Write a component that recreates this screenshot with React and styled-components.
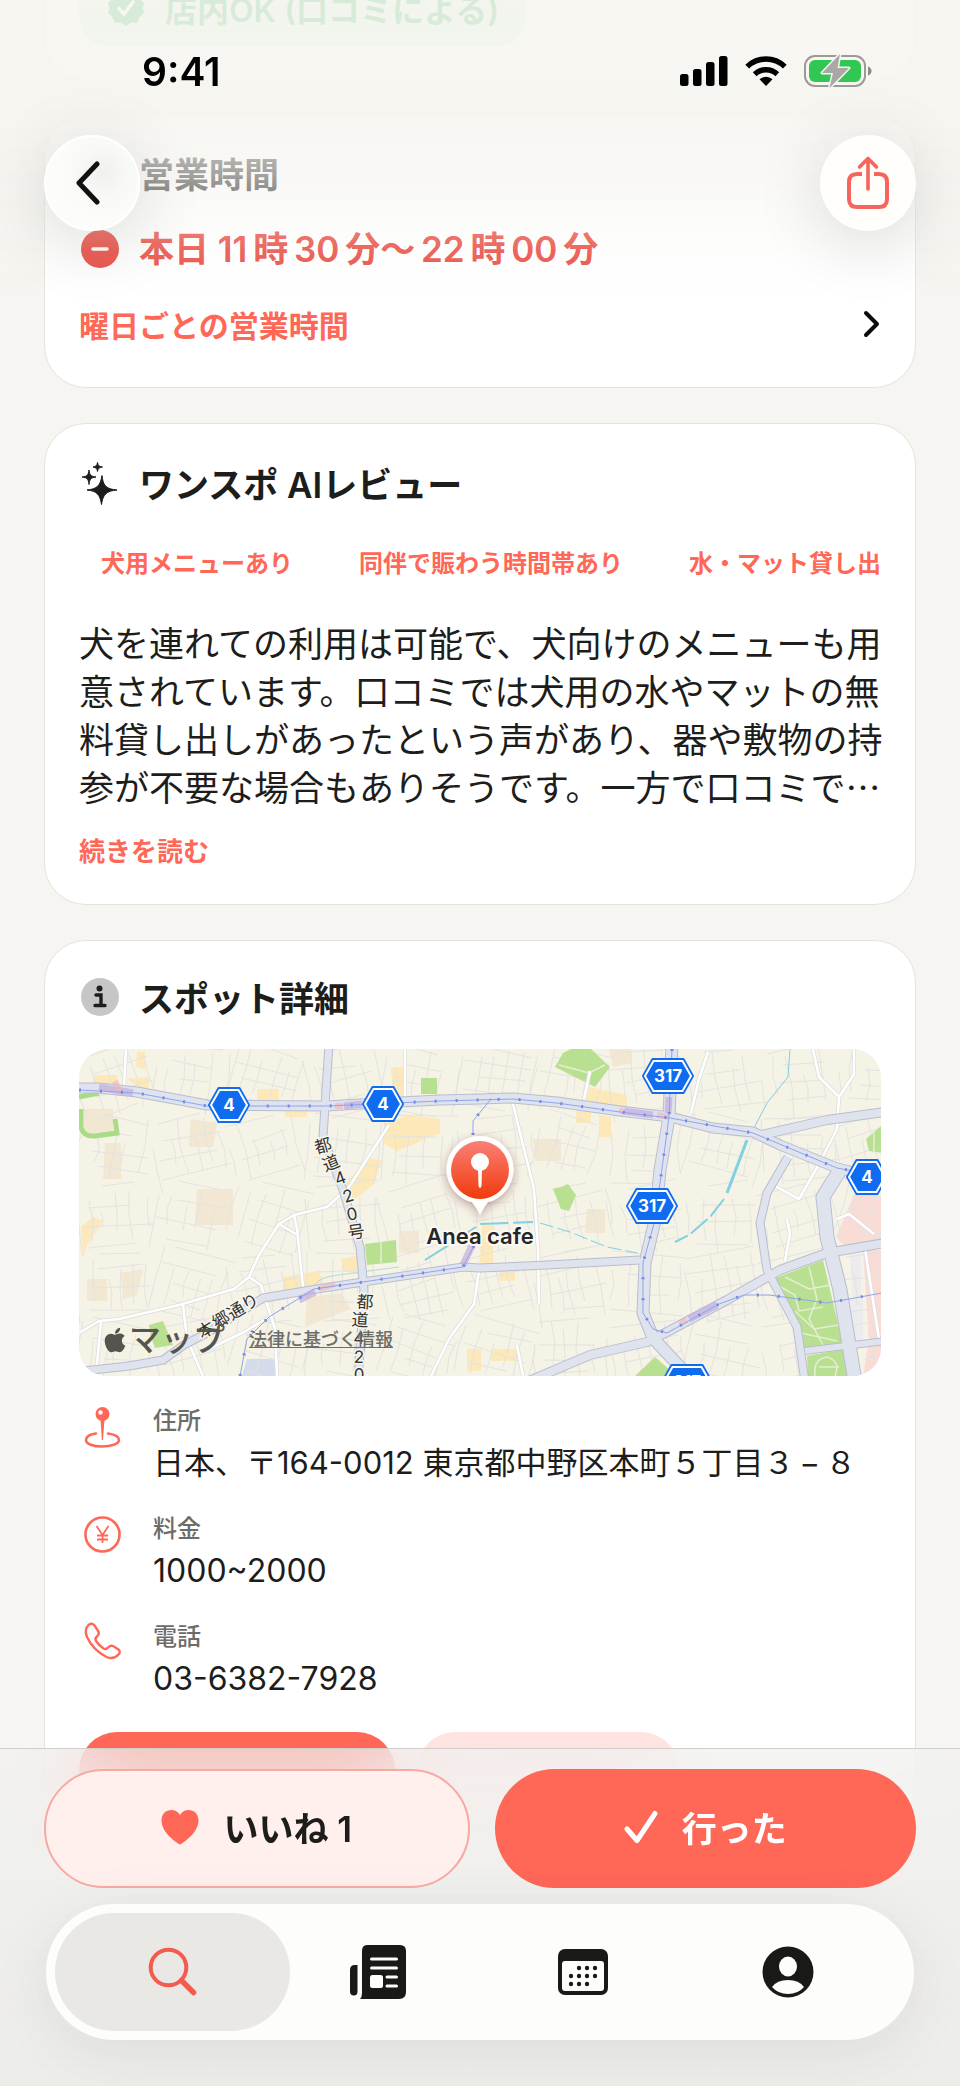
import React, { useState } from "react";
import styled, { createGlobalStyle } from "styled-components";
import { FaApple } from "react-icons/fa";

const GlobalStyle = createGlobalStyle`
    * {
        box-sizing: border-box;
    }

    body {
        margin: 0;
        background: #f6f5f1;
        color: #1d1d1b;
        font-family: Inter, "Noto Sans CJK JP", sans-serif;
        font-size: 35px;
    }

    button, a {
        font-family: inherit;
        color: inherit;
        text-decoration: none;
    }

    button {
        border: none;
        padding: 0;
        cursor: pointer;
    }

    svg {
        display: block;
        flex: none;
    }
`;

const RED = "#ff6757";

/* ---------- map data ---------- */

const majorRoads = [
    { d: "M-5 39L20 39L58 43L128 56L248 57L281 55L361 51L401 50L434 49L478 53L541 62L591 68L634 79L674 83L701 96L758 119L806 130", w: 9 },
    { d: "M593 -5L590 68L581 121L576 171L566 214L564 264L574 289L601 318L612 335", w: 11 },
    { d: "M250 -5L244 88L264 141L281 198L285 241L279 332", w: 7 },
    { d: "M-5 323L50 317L84 311L105 296L128 284L184 249L238 240L284 233L384 218L401 219L468 216L561 211", w: 7 },
    { d: "M450 332L511 306L568 293L588 283L648 251L701 221L748 204L806 194", w: 8 },
    { d: "M761 121L744 148L748 188L761 241L776 332", w: 13 },
    { d: "M806 63L748 71L678 87", w: 8 },
    { d: "M709 108L688 144L681 174L688 221L718 278L726 332", w: 7 },
    { d: "M726 302L806 292", w: 6 },
];

const minorRoads = [
    "M47 0L45 38",
    "M326 0L326 50",
    "M310 76L270 138L248 158L215 166L200 175L180 206L170 228L155 240L100 256L40 270L20 272L0 284",
    "M215 166L218 180L224 238",
    "M200 175L217 185",
    "M170 228L182 236L196 280L198 327",
    "M104 256L108 290L124 327",
    "M22 273L17 325",
    "M130 300L165 283L190 268",
    "M400 222L395 255L370 290L352 327",
    "M434 55L445 100L455 140L459 200L460 255",
    "M505 50L511 22",
    "M629 3L620 30L612 64",
    "M734 0L740 28L760 48L775 25L775 0",
    "M760 48L758 80L740 115L720 150L694 136",
    "M708 170L711 185L706 212",
    "M758 170L770 165L795 185",
    "M786 200L800 290",
    "M438 296L444 327",
    "M575 290L590 305",
];

const railways = [
    "M0 41L58 44L128 57L248 57L361 52L434 50L478 54L541 63L591 69L674 84L758 119L800 127",
    "M593 0L590 68L576 171L564 214L564 264L574 280L588 284L640 255L665 246L690 246L748 254L803 244",
    "M161 327L168 290L190 268L235 240L284 233L384 218L401 185",
    "M394 86L394 72L412 50",
];

const rivers = [
    { d: "M711 0L709 28L688 54L674 81", w: 1, dash: "none" },
    { d: "M668 91L648 144", w: 3, dash: "none" },
    { d: "M645 150L631 168L610 186L596 193", w: 2, dash: "22 4" },
    { d: "M346 211L378 191L401 175L454 173", w: 2, dash: "28 5" },
    { d: "M461 174L491 183L528 198L558 204", w: 1, dash: "14 4" },
];

const parks = [
    "M342 29H358V45H342Z",
    "M286 195L317 191L318 213L288 216Z",
    "M70 276L84 272L94 296L76 299L72 288Z",
    "M476 18L484 4L492 0H512L531 18L516 38L500 30Z",
    "M474 140L482 138L489 135L497 146L490 162L482 160Z",
    "M691 231L744 211L764 296L726 302L716 272Z",
    "M728 307L766 300L770 327H729Z",
    "M787 90L803 76V104L790 102Z",
    "M556 327L576 308L592 322L596 327Z",
];

const yellowBlocks = [
    "M14 26H38V36H14Z", "M58 2L66 3V20L57 18Z", "M58 38L48 30L70 28V42Z",
    "M178 40H200V52H178Z", "M206 60H228V68H206Z", "M312 18H326V50H314Z",
    "M306 74L330 66L361 70V84L318 102L304 94Z", "M288 108L303 112L294 136L276 150L262 142Z",
    "M204 228L240 222L244 236L204 246Z", "M262 210L282 206V226L264 222Z",
    "M2 178L14 168L24 172L8 196L4 210Z", "M497 62H512V74H497Z", "M510 38L548 46V62L506 56Z",
    "M520 66L532 68V88H520Z", "M403 176L414 176V220H400Z", "M420 222H436V232H420Z",
    "M412 300H438V312H412Z", "M388 300H402V322H388Z",
];

const tanBlocks = [
    "M5 60H34V86H5Z", "M112 70L138 74L134 98H110Z", "M118 140H154V176H116Z",
    "M26 94H42V130H24Z", "M228 248L262 244L272 260L226 278Z", "M42 224L64 220L58 246L44 250Z",
    "M8 230H28V252H8Z", "M454 90H482V112H456Z", "M508 160H526V184H506Z", "M320 182H340V204H320Z",
    "M530 0H552V14L534 18Z",
];

const shields = [
    { x: 150, y: 56, label: "4" },
    { x: 304, y: 55, label: "4" },
    { x: 589, y: 27, label: "317" },
    { x: 573, y: 157, label: "317" },
    { x: 788, y: 128, label: "4" },
    { x: 608, y: 333, label: "317" },
];

const roadLabels = [
    { ch: "都", x: 244, y: 97, r: -16 },
    { ch: "道", x: 252, y: 114, r: -22 },
    { ch: "4", x: 261, y: 129, r: -20 },
    { ch: "2", x: 269, y: 147, r: -18 },
    { ch: "0", x: 273, y: 165, r: -12 },
    { ch: "号", x: 277, y: 183, r: -8 },
    { ch: "都", x: 286, y: 253, r: 3 },
    { ch: "道", x: 281, y: 271, r: 3 },
    { ch: "4", x: 280, y: 289, r: 2 },
    { ch: "2", x: 280, y: 308, r: 2 },
    { ch: "0", x: 280, y: 326, r: 0 },
    { ch: "本", x: 127, y: 281, r: -32 },
    { ch: "郷", x: 142, y: 271, r: -32 },
    { ch: "通", x: 157, y: 262, r: -32 },
    { ch: "り", x: 171, y: 253, r: -30 },
];

// side streets: every block gets its own slightly turned grid
function buildStreets() {
    let seed = 11;
    const rnd = () => {
        seed = (seed * 16807) % 2147483647;
        return seed / 2147483647;
    };
    const out = [];
    for (let bx = 0; bx < 11; bx++) {
        for (let by = 0; by < 5; by++) {
            const cx = bx * 76 + 38;
            const cy = by * 68 + 34;
            const a = (rnd() - 0.5) * 0.6;
            const c = Math.cos(a);
            const s = Math.sin(a);
            const pt = (u, v) => `${Math.round(cx + u * c - v * s)} ${Math.round(cy + u * s + v * c)}`;
            for (let u = -38; u < 38; u += 10 + rnd() * 9) {
                const v0 = -36 + rnd() * 28;
                const v1 = 36 - rnd() * 28;
                out.push(`M${pt(u, v0)}L${pt(u + rnd() * 6 - 3, (v0 + v1) / 2)}L${pt(u, v1)}`);
            }
            for (let v = -34; v < 34; v += 13 + rnd() * 10) {
                const u0 = -38 + rnd() * 26;
                const u1 = 38 - rnd() * 26;
                out.push(`M${pt(u0, v)}L${pt(u1, v + rnd() * 8 - 4)}`);
            }
        }
    }
    return out.join("");
}

const streets = buildStreets();

// \u2006 is the narrow gap between kanji and digits
const details = [
    { id: "address", label: "住所", value: "日本、〒164-0012 東京都中野区本町５丁目３\u2006−\u2006８", long: true },
    { id: "price", label: "料金", value: "1000~2000" },
    { id: "phone", label: "電話", value: "03-6382-7928" },
];

const todayHours = "本日 11\u2006時\u200630\u2006分〜\u200622\u2006時\u200600\u2006分";

const tags = ["犬用メニューあり", "同伴で賑わう時間帯あり", "水・マット貸し出"];

const tabs = [
    { id: "search", name: "検索" },
    { id: "news", name: "ニュース" },
    { id: "calendar", name: "カレンダー" },
    { id: "account", name: "アカウント" },
];

/* ---------- icons ---------- */

const SignalIcon = () => (
    <svg width="48" height="32" viewBox="0 0 48 32">
        <rect x="0" y="19" width="8.500" height="12" rx="2.500" />
        <rect x="13" y="14" width="8.500" height="17" rx="2.500" />
        <rect x="26" y="7" width="8.500" height="24" rx="2.500" />
        <rect x="39" y="1" width="8.500" height="30" rx="2.500" />
    </svg>
);

const WifiIcon = () => (
    <svg width="42" height="32" viewBox="0 0 42 32">
        <path d="M21 31L14.5 24.3A9.5 9.5 0 0 1 27.500 24.3Z" />
        <path d="M9.700 19.200A16.500 16.500 0 0 1 32.300 19.200" fill="none" stroke="#000" strokeWidth="5.400" />
        <path d="M2.200 11.600A27 27 0 0 1 39.800 11.600" fill="none" stroke="#000" strokeWidth="5.400" />
    </svg>
);

const BatteryIcon = () => (
    <svg width="68" height="34" viewBox="0 0 68 34">
        <rect x="1" y="2" width="60" height="30" rx="10" fill="none" stroke="#9b9a97" strokeWidth="2" />
        <path d="M64 12.500Q67.500 14 67.500 17Q67.500 20 64 21.500Z" fill="#8b8a87" />
        <rect x="5" y="6" width="52" height="22" rx="6" fill="#30c752" />
        <path d="M36 0L18 19H29L25.500 34L45 14H33.500Z" fill="#a9a8a6" stroke="#f6f5f1" strokeWidth="3" strokeLinejoin="round" paintOrder="stroke" />
    </svg>
);

const ShareIcon = () => (
    <svg width="44" height="56" viewBox="0 0 44 56" fill="none" stroke="#f5655b" strokeWidth="4" strokeLinecap="round" strokeLinejoin="round">
        <path d="M16 19H11Q3 19 3 27V44Q3 52 11 52H33Q41 52 41 44V27Q41 19 33 19H28" strokeLinecap="butt" />
        <path d="M22 34V4M13.500 12L22 3.500L30.500 12" strokeWidth="3.600" />
    </svg>
);

const SparkleIcon = () => (
    <svg width="40" height="46" viewBox="0 0 40 46" fill="#1d1d1b">
        <path d="M23 14.500C24 24.500 27 28 38 29C27 30 24 33.500 22.500 43.500C21 33.500 18 30 8 29C18 28 21.500 24.500 23 14.500Z" stroke="#1d1d1b" strokeWidth="1" />
        <path d="M10 9C10.500 14 12 15.500 17 16C12 16.500 10.500 18 10 23.500C9.500 18 8 16.500 3 16C8 15.500 9.500 14 10 9Z" stroke="#1d1d1b" strokeWidth="1" />
        <path d="M18.500 1.500C19 4.500 20 5.500 23.500 6C20 6.500 19 7.500 18.500 10.500C18 7.500 17 6.500 14 6C17 5.500 18 4.500 18.500 1.500Z" stroke="#1d1d1b" strokeWidth="1" />
    </svg>
);

const InfoIcon = () => (
    <svg width="40" height="40" viewBox="0 0 40 40">
        <circle cx="21" cy="19" r="19" fill="#c6c6c6" />
        <circle cx="20.500" cy="10.500" r="3" fill="#1d1d1b" />
        <path d="M17 17H22V27.500M16 27.500H26" stroke="#1d1d1b" strokeWidth="3.400" fill="none" strokeLinecap="round" />
    </svg>
);

const ClosedIcon = () => (
    <svg width="40" height="40" viewBox="0 0 40 40">
        <circle cx="21" cy="21" r="19" fill="#e9483e" />
        <path d="M14 21H28" stroke="#fff" strokeWidth="3.500" strokeLinecap="round" />
    </svg>
);

const ClockIcon = () => (
    <svg width="40" height="40" viewBox="0 0 40 40" fill="none" stroke="#d3d3d0" strokeWidth="3">
        <circle cx="20" cy="20" r="17" />
        <path d="M20 9V20H12" />
    </svg>
);

const SealIcon = () => (
    <svg width="38" height="38" viewBox="0 0 38 38">
        <path d="M19 1L24 4.500L30 4L32.500 10L37 14L35.500 19L37 24L32.500 28L30 34L24 33.500L19 37L14 33.500L8 34L5.500 28L1 24L2.500 19L1 14L5.500 10L8 4L14 4.500Z" fill="#34b35a" strokeLinejoin="round" />
        <path d="M12 19.500L17 25L26 13" fill="none" stroke="#fff" strokeWidth="3.500" strokeLinecap="round" />
    </svg>
);

const DetailIcon = ({ id }) => {
    if (id === "address") {
        return (
            <svg width="46" height="48" viewBox="0 0 46 48" fill="none" stroke={RED} strokeWidth="2.600">
                <path d="M17 29.500C10 30.500 7 33 7 36C7 40 14 42.500 23 42.500S40 40 40 36C40 33 36 30.500 29 29.500" strokeLinecap="round" />
                <path d="M21.500 15H25.500L24 36H22.800Z" fill={RED} stroke="none" />
                <circle cx="23.500" cy="10" r="7" fill={RED} stroke="none" />
                <circle cx="21.500" cy="8.500" r="2.200" fill="#fff" stroke="none" />
            </svg>
        );
    }
    if (id === "price") {
        return (
            <svg width="46" height="48" viewBox="0 0 46 48" fill="none" stroke={RED} strokeWidth="2.600">
                <circle cx="23.500" cy="22.500" r="17" />
                <path d="M17.500 14L23.500 23L29.500 14M23.500 23V31M18 23.500H29M18 27.500H29" strokeWidth="1.800" />
            </svg>
        );
    }
    return (
        <svg width="46" height="48" viewBox="0 0 46 48" fill="none" stroke={RED} strokeWidth="2.400" strokeLinejoin="round">
            <path d="M9.500 5Q13 2.500 15.500 5.500L19.500 11.500Q20.500 14 18 16.500Q15.500 18.500 17 21Q20.500 26 24.500 28.500Q27 30 29 27.500Q31.500 25 34 26L39.500 29.500Q42 31.500 39.500 34.500Q34.500 40 27.500 37Q14 30 8 17Q5 9.500 9.500 5Z" />
        </svg>
    );
};

const TabIcon = ({ id }) => {
    switch (id) {
        case "search":
            return (
                <svg width="52" height="52" viewBox="0 0 52 52" fill="none" stroke="#f25c4e">
                    <circle cx="21.500" cy="21.500" r="17.800" strokeWidth="4" />
                    <path d="M34.500 34.500L46.500 46.500" strokeWidth="5.500" strokeLinecap="round" />
                </svg>
            );
        case "news":
            return (
                <svg width="56" height="54" viewBox="0 0 56 54" fill="#191915">
                    <path d="M17 0H50Q56 0 56 6V47Q56 54 49 54H10Q12 52 12 48V6Q12 0 17 0Z" />
                    <path d="M7.500 20V46.500Q7.500 50.500 4 50.500Q0 50.500 0 46.500V25Q0 20 5 20Z" />
                    <path d="M21.500 14H46.500M21.500 23H46.500M37 32H46.500M37 41H46.500" stroke="#fdfdf9" strokeWidth="3" strokeLinecap="round" />
                    <rect x="20" y="30" width="13" height="13" rx="2.500" fill="#fdfdf9" />
                </svg>
            );
        case "calendar":
            return (
                <svg width="50" height="46" viewBox="0 0 50 46">
                    <rect width="50" height="46" rx="7" fill="#191915" />
                    <rect x="4" y="12" width="42" height="30" rx="3" fill="#fdfdf9" />
                    {[[21, 19], [29, 19], [37, 19], [13, 27], [21, 27], [29, 27], [37, 27], [13, 35], [21, 35], [29, 35]].map(([x, y]) => (
                        <circle key={`${x}-${y}`} cx={x} cy={y} r="2.200" fill="#191915" />
                    ))}
                </svg>
            );
        default:
            return (
                <svg width="52" height="52" viewBox="0 0 52 52">
                    <circle cx="26" cy="26" r="25.500" fill="#191915" />
                    <ellipse cx="26" cy="20.500" rx="9" ry="10" fill="#fdfdf9" />
                    <path d="M10 41Q15 34 26 34T42 41Q36 48 26 48T10 41Z" fill="#fdfdf9" />
                </svg>
            );
    }
};

const Shield = ({ x, y, label }) => {
    const w = label.length > 1 ? 26 : 21;
    const hex = (k) => {
        const a = w - k;
        const b = w - 10 - k / 2;
        const h = 18 - k;
        return `M${-a} 0L${-b} ${-h}H${b}L${a} 0L${b} ${h}H${-b}Z`;
    };
    return (
        <g transform={`translate(${x} ${y})`}>
            <path d={hex(1)} fill="#0f6bf0" stroke="#0f6bf0" strokeWidth="2" strokeLinejoin="round" />
            <path d={hex(3)} fill="#0f6bf0" stroke="#fff" strokeWidth="2" strokeLinejoin="round" />
            <text y="6" textAnchor="middle" fontFamily="Inter" fontSize="17" fontWeight="700" fill="#fff">{label}</text>
        </g>
    );
};

const MapDrawing = () => (
    <svg viewBox="0 0 802 327" width="100%" preserveAspectRatio="xMidYMid slice">
        <defs>
            <linearGradient id="pin" x1="0" y1="0" x2="0" y2="1">
                <stop offset="0" stopColor="#fb7f76" />
                <stop offset="1" stopColor="#f03a0c" />
            </linearGradient>
            <filter id="pinShadow" x="-50%" y="-50%" width="200%" height="200%">
                <feDropShadow dx="0" dy="3" stdDeviation="5" floodColor="#5a2a20" floodOpacity="0.4" />
            </filter>
        </defs>
        <rect width="802" height="327" fill="#f5f2e6" />
        <path d={tanBlocks.join("")} fill="#f1e7d3" />
        <path d={yellowBlocks.join("")} fill="#fce8b8" />
        <path d="M803 146L775 146L757 188L770 203L803 194ZM784 201H803V327H784L790 290Z" fill="#fadcd6" />
        <path d="M771 205H782V296L776 296Z M766 250H784V290H772Z" fill="#ecebed" />
        <path d="M168 310H199V327H163Z" fill="#d4dbea" />
        <path d={streets} fill="none" stroke="#e3e3e0" strokeWidth="1" />
        <path d={parks.join("")} fill="#b9e091" />
        <path d="M0 48L20 44M2 60V78Q4 88 16 87L38 84L36 70" fill="none" stroke="#a9dc85" strokeWidth="5" />
        <path d="M302 193V214M480 16L510 24L526 16M512 24L508 36M795 84V104M698 236L716 246L720 262L744 258M706 228L730 240L752 236M716 262L735 280L760 276M730 218L738 250L730 270L745 298M722 284L758 292M736 327Q734 310 748 308Q762 312 756 327M740 318H760" fill="none" stroke="#e5eed2" strokeWidth="1.500" />
        {rivers.map((r) => (
            <path key={r.d} d={r.d} fill="none" stroke="#7fd0e0" strokeWidth={r.w} strokeDasharray={r.dash} />
        ))}
        <path d="M236 236Q240 228 260 226L320 218" fill="none" stroke="#b5dccb" strokeWidth="1" />
        <path d={minorRoads.join("")} fill="none" stroke="#dcdcdc" strokeWidth="4" strokeLinejoin="round" />
        <path d={minorRoads.join("")} fill="none" stroke="#fff" strokeWidth="2.600" strokeLinejoin="round" />
        {majorRoads.map((r) => (
            <path key={r.d} d={r.d} fill="none" stroke="#b9bdcf" strokeWidth={r.w + 2} strokeLinejoin="round" />
        ))}
        {majorRoads.map((r) => (
            <path key={r.d} d={r.d} fill="none" stroke="#dfe3ee" strokeWidth={r.w} strokeLinejoin="round" />
        ))}
        <path d="M20 38L54 44M265 57L283 55M545 62L574 66M590 48L589 64M610 270L638 256M220 251L236 243M384 216L396 190" fill="none" stroke="#bda4dc" strokeOpacity="0.6" strokeWidth="7" />
        <path d="M578 66L590 68M545 60L541 64M256 57H264M600 275L608 271M240 240L256 235M36 32L42 46" fill="none" stroke="#f2b3b8" strokeOpacity="0.6" strokeWidth="6" />
        {railways.map((d) => (
            <path key={d} d={d} fill="none" stroke="#8fa4ec" strokeWidth="1" />
        ))}
        {railways.map((d) => (
            <path key={d} d={d} fill="none" stroke="#7189e6" strokeWidth="3" strokeDasharray="2 19" />
        ))}
        {shields.map((s) => (
            <Shield key={`${s.x}-${s.y}`} {...s} />
        ))}
        {roadLabels.map((l) => (
            <text
                key={`${l.x}-${l.y}`}
                transform={`translate(${l.x} ${l.y}) rotate(${l.r})`}
                y="6"
                textAnchor="middle"
                fontSize="17"
                fill="#35332f"
                stroke="#f8f6ee"
                strokeWidth="3"
                paintOrder="stroke"
            >
                {l.ch}
            </text>
        ))}
        <g filter="url(#pinShadow)">
            <path d="M401 166Q398 159 393 153A33.500 33.500 0 1 1 409 153Q404 159 401 166Z" fill="#fff" />
        </g>
        <circle cx="401" cy="121" r="29" fill="url(#pin)" />
        <circle cx="401" cy="113" r="9" fill="#fff" />
        <path d="M399 121H403L402.500 137Q401 141 399.500 137Z" fill="#fff" />
        <text x="401" y="195" textAnchor="middle" fontSize="22" fontWeight="600" fill="#262624" stroke="#fbf9f2" strokeWidth="4" paintOrder="stroke">
            Anea cafe
        </text>
    </svg>
);

/* ---------- page ---------- */

function App() {
    const [activeTab, setActiveTab] = useState("search");
    const [likes, setLikes] = useState(1);

    return (
        <Screen>
            <GlobalStyle />

            <Header>
                <StatusBar>
                    <time>9:41</time>
                    <StatusIcons>
                        <SignalIcon />
                        <WifiIcon />
                        <BatteryIcon />
                    </StatusIcons>
                </StatusBar>
                <NavRow>
                    <RoundButton type="button" aria-label="戻る" $glass>
                        <svg width="26" height="44" viewBox="0 0 26 44" fill="none" stroke="#111" strokeWidth="5" strokeLinecap="round" strokeLinejoin="round">
                            <path d="M22 3L4 22L22 41" />
                        </svg>
                    </RoundButton>
                    <RoundButton type="button" aria-label="共有">
                        <ShareIcon />
                    </RoundButton>
                </NavRow>
            </Header>

            <Content>
                <Card>
                    <Badge>
                        <SealIcon />
                        店内OK (口コミによる)
                    </Badge>
                </Card>

                <Card>
                    <TitleRow>
                        <ClockIcon />
                        <Title>営業時間</Title>
                    </TitleRow>
                    <TitleRow>
                        <ClosedIcon />
                        <TodayHours>{todayHours}</TodayHours>
                    </TitleRow>
                    <WeekLink href="#hours">
                        曜日ごとの営業時間
                        <svg width="18" height="28" viewBox="0 0 18 28" fill="none" stroke="#0c0c0c" strokeWidth="4" strokeLinecap="round" strokeLinejoin="round">
                            <path d="M3 3L14 14L3 25" />
                        </svg>
                    </WeekLink>
                </Card>

                <Card>
                    <TitleRow $tall>
                        <SparkleIcon />
                        <Title>ワンスポ AIレビュー</Title>
                    </TitleRow>
                    <Tags>
                        {tags.map((tag) => (
                            <li key={tag}>{tag}</li>
                        ))}
                    </Tags>
                    <Review>
                        犬を連れての利用は可能で、犬向けのメニューも用<br />
                        意されています。口コミでは犬用の水やマットの無<br />
                        料貸し出しがあったという声があり、器や敷物の持<br />
                        参が不要な場合もありそうです。一方で口コミで…
                    </Review>
                    <MoreLink href="#review">続きを読む</MoreLink>
                </Card>

                <Card>
                    <TitleRow>
                        <InfoIcon />
                        <Title>スポット詳細</Title>
                    </TitleRow>
                    <MapBox>
                        <MapDrawing />
                        <MapCredit>
                            <MapBrand>
                                <FaApple size={28} />
                                マップ
                            </MapBrand>
                            <a href="#legal">法律に基づく情報</a>
                        </MapCredit>
                    </MapBox>
                    <Details>
                        {details.map((item) => (
                            <DetailRow key={item.id} $long={item.long}>
                                <DetailIcon id={item.id} />
                                <div>
                                    <dt>{item.label}</dt>
                                    <dd>{item.value}</dd>
                                </div>
                            </DetailRow>
                        ))}
                    </Details>
                    <SpotActions>
                        <SpotButton type="button" aria-label="経路" $primary />
                        <SpotButton type="button" aria-label="電話をかける" />
                    </SpotActions>
                </Card>
            </Content>

            <Footer>
                <Actions>
                    <ActionButton type="button" onClick={() => setLikes(likes + 1)}>
                        <svg width="38" height="36" viewBox="0 0 38 36" fill={RED}>
                            <path d="M19 35.500C16.500 34.500 0.500 24 0.500 11.500C0.500 5 5 1 10.300 1C14.500 1 17.500 3 19 6C20.500 3 23.500 1 27.700 1C33 1 37.500 5 37.500 11.500C37.500 24 21.500 34.500 19 35.500Z" />
                        </svg>
                        いいね {likes}
                    </ActionButton>
                    <ActionButton type="button" $primary>
                        <svg width="34" height="34" viewBox="0 0 34 34" fill="none" stroke="#fff" strokeWidth="5" strokeLinecap="round" strokeLinejoin="round">
                            <path d="M3 19L13 30.500L31 3.500" />
                        </svg>
                        行った
                    </ActionButton>
                </Actions>
                <TabBar>
                    {tabs.map((tab) => (
                        <Tab
                            key={tab.id}
                            type="button"
                            aria-label={tab.name}
                            $active={tab.id === activeTab}
                            onClick={() => setActiveTab(tab.id)}
                        >
                            <TabIcon id={tab.id} />
                        </Tab>
                    ))}
                </TabBar>
            </Footer>
        </Screen>
    );
}

const Screen = styled.div`
    position: relative;
    min-height: 100vh;
    overflow: hidden;
`;

/* floats over the scrolled content and fades it out */
const Header = styled.header`
    position: fixed;
    top: 0;
    left: 0;
    right: 0;
    z-index: 2;
    padding: 50px 44px 70px;
    background: linear-gradient(
        rgba(246, 245, 240, 0.84) 0,
        rgba(246, 245, 240, 0.88) 115px,
        rgba(245, 244, 240, 0.62) 175px,
        rgba(245, 244, 242, 0.16) 250px,
        rgba(246, 245, 242, 0) 300px
    );
`;

const StatusBar = styled.div`
    display: flex;
    align-items: center;
    justify-content: space-between;
    height: 42px;
    margin-bottom: 43px;
    padding: 0 44px 0 98px;
    color: #000;
    font-size: 39px;
    font-weight: 600;
`;

const StatusIcons = styled.div`
    display: flex;
    align-items: center;
    gap: 17px;
`;

const NavRow = styled.nav`
    display: flex;
    justify-content: space-between;
`;

const RoundButton = styled.button`
    display: flex;
    align-items: center;
    justify-content: center;
    width: 96px;
    height: 96px;
    padding-right: ${(p) => (p.$glass ? "8px" : "0")};
    border-radius: 50%;
    border: ${(p) => (p.$glass ? "2px solid #fff" : "none")};
    background: ${(p) => (p.$glass ? "radial-gradient(circle at 62% 38%, #f0f0ee 0, #f8f8f6 30%, #fcfcfa 60%)" : "#fffefb")};
    box-shadow: 0 12px 70px rgba(0, 0, 0, 0.14);
`;

const Content = styled.main`
    display: flex;
    flex-direction: column;
    gap: 35px;
    /* the list is scrolled a little, the first card starts above the screen */
    margin-top: -65px;
    padding: 0 44px 200px;
`;

const Card = styled.section`
    display: flex;
    flex-direction: column;
    align-items: stretch;
    gap: 28px;
    padding: 34px;
    border: 1px solid #e6e3dc;
    border-radius: 42px;
    background: #fff;
`;

const Badge = styled.div`
    display: flex;
    align-items: center;
    align-self: flex-start;
    gap: 20px;
    height: 76px;
    padding: 0 28px;
    border-radius: 30px;
    background: #dcf3e0;
    color: #34b35a;
    font-size: 32px;
    font-weight: 600;
`;

const TitleRow = styled.div`
    display: flex;
    align-items: center;
    gap: 20px;
    height: ${(p) => (p.$tall ? "52px" : "46px")};
`;

const Title = styled.h2`
    margin: 0;
    padding-bottom: 4px;
    font-size: 35px;
    font-weight: 600;
`;

const TodayHours = styled.p`
    margin: 0;
    padding-bottom: 4px;
    color: #ea4c42;
    font-size: 35px;
    font-weight: 600;
    white-space: nowrap;
`;

const WeekLink = styled.a`
    display: flex;
    align-items: center;
    justify-content: space-between;
    height: 54px;
    padding-bottom: 4px;
    color: ${RED};
    font-size: 30px;
    font-weight: 600;
`;

const Tags = styled.ul`
    display: flex;
    gap: 22px;
    margin: 0;
    padding: 0;
    overflow: hidden;
    list-style: none;

    li {
        flex: none;
        padding: 0 22px;
        color: ${RED};
        font-size: 24px;
        font-weight: 600;
        line-height: 52px;
    }
`;

const Review = styled.p`
    margin: 0;
    font-family: "Noto Sans CJK JP", sans-serif;
    font-size: 35px;
    line-height: 48px;
    white-space: nowrap;
`;

const MoreLink = styled.a`
    align-self: flex-start;
    margin-top: -4px;
    color: ${RED};
    font-size: 26px;
    font-weight: 600;
    line-height: 36px;
`;

const MapBox = styled.div`
    position: relative;
    overflow: hidden;
    border-radius: 28px;
`;

const MapCredit = styled.div`
    position: absolute;
    left: 22px;
    bottom: 16px;
    display: flex;
    align-items: center;
    gap: 24px;
    color: #6e6d67;
    font-size: 18px;
    font-weight: 500;
    line-height: 40px;

    a {
        text-decoration: underline;
    }
`;

const MapBrand = styled.span`
    display: flex;
    align-items: center;
    color: #55544f;
    font-size: 32px;
`;

const Details = styled.dl`
    display: flex;
    flex-direction: column;
    gap: 24px;
    margin: 0;
`;

const DetailRow = styled.div`
    display: flex;
    gap: 28px;

    dt {
        color: #6d6c68;
        font-size: 24px;
        font-weight: 500;
        line-height: 34px;
    }

    dd {
        margin: 0;
        font-size: ${(p) => (p.$long ? "31px" : "32px")};
        line-height: 50px;
        white-space: nowrap;
    }
`;

const SpotActions = styled.div`
    display: flex;
    gap: 22px;
`;

const SpotButton = styled.button`
    width: ${(p) => (p.$primary ? "316px" : "262px")};
    height: 76px;
    border-radius: 38px;
    background: ${(p) => (p.$primary ? RED : "#ffe3e0")};
`;

const Footer = styled.footer`
    position: fixed;
    left: 0;
    right: 0;
    bottom: 0;
    z-index: 2;
    display: flex;
    flex-direction: column;
    gap: 16px;
    padding: 20px 44px 46px;
    border-top: 1px solid #cfcecb;
    background: linear-gradient(rgba(240, 240, 239, 0.7), rgba(234, 234, 231, 0.85));
    backdrop-filter: blur(40px);
`;

const Actions = styled.div`
    display: flex;
    gap: 25px;
`;

const ActionButton = styled.button`
    flex: 1;
    display: flex;
    align-items: center;
    justify-content: center;
    gap: 24px;
    height: 119px;
    padding-bottom: 4px;
    border: ${(p) => (p.$primary ? "none" : "2px solid #f6aaa3")};
    border-radius: 60px;
    background: ${(p) => (p.$primary ? RED : "#fff0ed")};
    color: ${(p) => (p.$primary ? "#fff" : "#1d1d1b")};
    font-size: 35px;
    font-weight: 600;
`;

const TabBar = styled.nav`
    display: flex;
    margin: 0 2px;
    padding: 9px 24px;
    border-radius: 68px;
    background: #fdfdf9;
    box-shadow: 0 10px 60px rgba(0, 0, 0, 0.08);
`;

/* the selected pill is wider than its share of the bar */
const Tab = styled.button`
    flex: 1;
    display: flex;
    align-items: center;
    justify-content: center;
    height: 118px;
    margin: 0 -15px;
    padding: 0 15px;
    border-radius: 59px;
    background: ${(p) => (p.$active ? "#e9e8e5" : "transparent")};
`;

export default App;
